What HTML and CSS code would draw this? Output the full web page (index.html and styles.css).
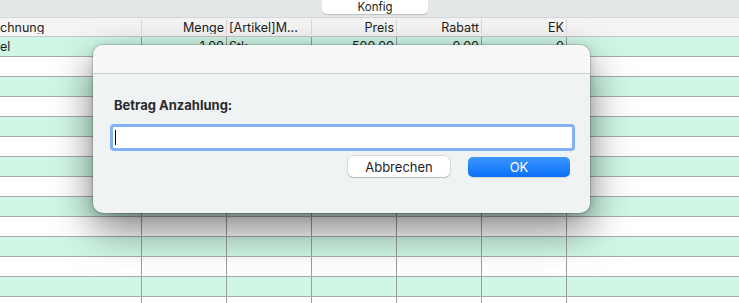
FILE: index.html
```html
<!DOCTYPE html>
<html lang="de">
<head>
    <meta charset="UTF-8">
    <title>Anzahlung</title>
    <link rel="stylesheet" href="styles.css">
</head>
<body>

<div class="toolbar">
    <button class="konfig">Konfig</button>
</div>

<div class="grid">
    <div class="row head">
        <div class="cell first">chnung</div>
        <div class="cell num">Menge</div>
        <div class="cell">[Artikel]M...</div>
        <div class="cell num">Preis</div>
        <div class="cell num">Rabatt</div>
        <div class="cell num">EK</div>
        <div class="cell last"></div>
    </div>
    <div class="row">
        <div class="cell first">el</div>
        <div class="cell num">1,00</div>
        <div class="cell">Stk</div>
        <div class="cell num">500,00</div>
        <div class="cell num">0,00</div>
        <div class="cell num">0</div>
        <div class="cell last"></div>
    </div>
    <div class="row"><div class="cell"></div><div class="cell"></div><div class="cell"></div><div class="cell"></div><div class="cell"></div><div class="cell"></div><div class="cell last"></div></div>
    <div class="row"><div class="cell"></div><div class="cell"></div><div class="cell"></div><div class="cell"></div><div class="cell"></div><div class="cell"></div><div class="cell last"></div></div>
    <div class="row"><div class="cell"></div><div class="cell"></div><div class="cell"></div><div class="cell"></div><div class="cell"></div><div class="cell"></div><div class="cell last"></div></div>
    <div class="row"><div class="cell"></div><div class="cell"></div><div class="cell"></div><div class="cell"></div><div class="cell"></div><div class="cell"></div><div class="cell last"></div></div>
    <div class="row"><div class="cell"></div><div class="cell"></div><div class="cell"></div><div class="cell"></div><div class="cell"></div><div class="cell"></div><div class="cell last"></div></div>
    <div class="row"><div class="cell"></div><div class="cell"></div><div class="cell"></div><div class="cell"></div><div class="cell"></div><div class="cell"></div><div class="cell last"></div></div>
    <div class="row"><div class="cell"></div><div class="cell"></div><div class="cell"></div><div class="cell"></div><div class="cell"></div><div class="cell"></div><div class="cell last"></div></div>
    <div class="row"><div class="cell"></div><div class="cell"></div><div class="cell"></div><div class="cell"></div><div class="cell"></div><div class="cell"></div><div class="cell last"></div></div>
    <div class="row"><div class="cell"></div><div class="cell"></div><div class="cell"></div><div class="cell"></div><div class="cell"></div><div class="cell"></div><div class="cell last"></div></div>
    <div class="row"><div class="cell"></div><div class="cell"></div><div class="cell"></div><div class="cell"></div><div class="cell"></div><div class="cell"></div><div class="cell last"></div></div>
    <div class="row"><div class="cell"></div><div class="cell"></div><div class="cell"></div><div class="cell"></div><div class="cell"></div><div class="cell"></div><div class="cell last"></div></div>
    <div class="row"><div class="cell"></div><div class="cell"></div><div class="cell"></div><div class="cell"></div><div class="cell"></div><div class="cell"></div><div class="cell last"></div></div>
    <div class="row"><div class="cell"></div><div class="cell"></div><div class="cell"></div><div class="cell"></div><div class="cell"></div><div class="cell"></div><div class="cell last"></div></div>
</div>

<div class="dialog">
    <div class="dialog-title"></div>
    <div class="dialog-body">
        <label class="prompt">Betrag Anzahlung:</label>
        <div class="field"><span class="caret"></span></div>
        <div class="actions">
            <button class="btn">Abbrechen</button>
            <button class="btn primary">OK</button>
        </div>
    </div>
</div>

</body>
</html>
```

FILE: styles.css
```css
body {
    margin: 0;
    width: 739px;
    height: 303px;
    overflow: hidden;
    font-family: Inter, 'Liberation Sans', sans-serif;
    font-size: 12.5px;
    color: #1c1c1c;
    background: #fff;
    position: relative;
}

.toolbar {
    height: 18px;
    background: #e5e8e9;
    border-bottom: 1px solid #d4d6d7;
    box-sizing: border-box;
    padding-left: 322px;
}

.konfig {
    display: block;
    width: 106px;
    height: 14px;
    padding: 0;
    border: none;
    border-radius: 0 0 5px 5px;
    background: #fff;
    box-shadow: 0 1px 1px rgba(0,0,0,0.18);
    font-family: inherit;
    font-size: 11.5px;
    line-height: 12px;
    color: #222;
}

.row {
    display: grid;
    grid-template-columns: 142px 85px 85px 85px 85px 85px 1fr;
    height: 20px;
    border-bottom: 1px solid #a9a9a9;
    box-sizing: border-box;
}

.row:nth-child(even) { background: #d0f7e6; }
.row:nth-child(odd) { background: #fff; }

.row.head {
    height: 19px;
    background: #f5f5f5;
    border-bottom: 1px solid #c6c6c6;
}

.cell {
    border-right: 1px solid #9c9c9c;
    padding: 0 2px;
    line-height: 19px;
    white-space: nowrap;
    overflow: hidden;
}

.cell.first { padding-left: 0; }
.cell.num { text-align: right; }
.cell.last { border-right: none; }

.head .cell {
    border-right-color: #dadada;
    line-height: 18px;
    margin: 1px 0 2px;
}

/* Dialog ueber der Tabelle */
.dialog {
    position: absolute;
    left: 93px;
    top: 45px;
    width: 497px;
    height: 168px;
    border-radius: 10px;
    overflow: hidden;
    background: #f0f3f4;
    box-shadow: 0 0 0 1px rgba(0,0,0,0.13), 0 16px 40px rgba(0,0,0,0.5), 0 2px 8px rgba(0,0,0,0.15);
    display: flex;
    flex-direction: column;
}

.dialog-title {
    height: 28px;
    background: #f6f8f9;
    border-bottom: 1px solid #cdd0d1;
}

.dialog-body {
    padding: 22px 15px 0 17px;
    display: flex;
    flex-direction: column;
}

.prompt {
    font-size: 13px;
    font-weight: 700;
    color: #2a2a2a;
    margin-left: 4px;
    line-height: 18px;
}

.field {
    margin-top: 10px;
    height: 27px;
    border: 3px solid #80b2f4;
    border-radius: 4px;
    background: #fff;
    box-sizing: border-box;
    display: flex;
    align-items: center;
    padding-left: 2px;
}

.caret {
    width: 1px;
    height: 15px;
    background: #000;
}

.actions {
    display: flex;
    justify-content: flex-end;
    gap: 18px;
    margin-top: 5px;
    padding-right: 5px;
}

.btn {
    width: 102px;
    height: 21px;
    padding: 0;
    border: none;
    border-radius: 5px;
    background: #fff;
    box-shadow: 0 0 0 0.5px rgba(0,0,0,0.2), 0 1px 1px rgba(0,0,0,0.15);
    font-family: inherit;
    font-size: 13px;
    color: #222;
}

.btn.primary {
    height: 20px;
    margin-top: 1px;
    background: linear-gradient(180deg, #3d97ff 0%, #0a6ff7 100%);
    color: #fff;
    box-shadow: 0 1px 1px rgba(0,0,0,0.12);
}
```
